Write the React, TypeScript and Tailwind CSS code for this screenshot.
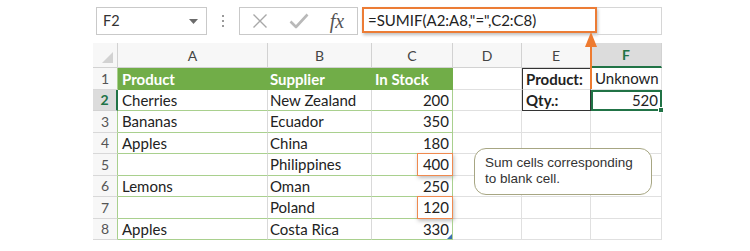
import React from 'react';

const font = { fontFamily: 'Lato, "Open Sans", sans-serif' };

type Row = { a: string; b: string; c: string; hl?: boolean; e?: string; f?: string };

const rows: Row[] = [
  { a: 'Cherries', b: 'New Zealand', c: '200', e: 'Qty.:', f: '520' },
  { a: 'Bananas', b: 'Ecuador', c: '350' },
  { a: 'Apples', b: 'China', c: '180' },
  { a: '', b: 'Philippines', c: '400', hl: true },
  { a: 'Lemons', b: 'Oman', c: '250' },
  { a: '', b: 'Poland', c: '120', hl: true },
  { a: 'Apples', b: 'Costa Rica', c: '330' },
];

function XIcon() {
  return (
    <svg width="16" height="16" viewBox="0 0 16 16">
      <path d="M1.5 1.5 L14.5 14.5 M14.5 1.5 L1.5 14.5" stroke="#a8a8a8" strokeWidth="1.4" fill="none" />
    </svg>
  );
}

function CheckIcon() {
  return (
    <svg width="20" height="16" viewBox="0 0 20 16">
      <path d="M1.5 8.5 L7 14 L18.5 1.5" stroke="#b9b9b9" strokeWidth="2.6" fill="none" strokeLinejoin="round" />
    </svg>
  );
}

export default function App() {
  return (
    <div className="relative w-[750px] h-[251px] bg-white overflow-hidden text-[#222]" style={font}>
      {/* formula bar */}
      <div className="flex items-start pt-[7px] pl-[96px]">
        <div className="w-[111px] h-[28px] border border-[#c9c9c9] bg-white flex items-center justify-between pl-[6px] pr-[8px]">
          <span className="text-[14.5px] text-[#333]">F2</span>
          <svg width="9" height="5" viewBox="0 0 9 5">
            <path d="M0 0 L9 0 L4.5 5 Z" fill="#6b6b6b" />
          </svg>
        </div>
        <div className="w-[32px] h-[28px] flex flex-col items-center justify-center gap-[3px]">
          <span className="block w-[2px] h-[2px] bg-[#9a9a9a]" />
          <span className="block w-[2px] h-[2px] bg-[#9a9a9a]" />
          <span className="block w-[2px] h-[2px] bg-[#9a9a9a]" />
        </div>
        <div className="w-[119px] h-[28px] border border-[#c9c9c9] bg-white flex items-center">
          <div className="w-[38px] flex justify-center pl-[2px]">
            <XIcon />
          </div>
          <div className="w-[42px] flex justify-center">
            <CheckIcon />
          </div>
          <div className="flex-1 flex justify-center pr-[3px]">
            <span className="italic text-[20px] leading-none text-[#555]" style={{ fontFamily: '"Liberation Serif", serif' }}>
              fx
            </span>
          </div>
        </div>
        <div className="ml-[4px] w-[300px] h-[28px] flex">
          <div className="w-[235px] h-[26px] border-2 border-[#ec7c35] bg-white flex items-center pl-[4px] shadow-[1px_2px_3px_rgba(0,0,0,0.25)]">
            <span className="text-[15px] text-[#222]">=SUMIF(A2:A8,"=",C2:C8)</span>
          </div>
          <div className="flex-1 h-[28px] border-t border-r border-b border-[#d6d6d6]" />
        </div>
      </div>

      {/* grid */}
      <div className="ml-[93px] mt-[8px] grid grid-cols-[25px_150px_104px_81px_69px_69px_71px] grid-rows-[25px_repeat(8,21.5px)] w-[569px]">
        {/* header row */}
        <div className="relative bg-[#f7f7f7] border-r border-b border-[#d2d2d2]">
          <svg className="absolute right-[4px] bottom-[4px]" width="11" height="11" viewBox="0 0 11 11">
            <path d="M11 0 L11 11 L0 11 Z" fill="#d2d2d2" />
          </svg>
        </div>
        <div className="bg-[#f7f7f7] border-r border-b border-[#d2d2d2] flex items-center justify-center text-[14px] text-[#444]">A</div>
        <div className="bg-[#f7f7f7] border-r border-b border-[#d2d2d2] flex items-center justify-center text-[14px] text-[#444]">B</div>
        <div className="bg-[#f7f7f7] border-r border-b border-[#d2d2d2] flex items-center justify-center text-[14px] text-[#444]">C</div>
        <div className="bg-[#f7f7f7] border-r border-b border-[#d2d2d2] flex items-center justify-center text-[14px] text-[#444]">D</div>
        <div className="bg-[#f7f7f7] border-r border-b border-[#d2d2d2] flex items-center justify-center text-[14px] text-[#444]">E</div>
        <div className="bg-[#dcdcdc] border-r border-[#d2d2d2] border-b-2 border-b-[#217346] flex items-center justify-center text-[14px] font-bold text-[#217346]">F</div>

        {/* row 1 */}
        <div className="bg-[#f7f7f7] border-r border-r-[#a9d08e] border-b border-b-[#d8d8d8] flex items-center justify-center text-[14px] text-[#555]">1</div>
        <div className="bg-[#71ad48] flex items-center pl-[4px] text-[15px] font-bold text-white">Product</div>
        <div className="bg-[#71ad48] flex items-center pl-[2px] text-[15px] font-bold text-white">Supplier</div>
        <div className="bg-[#71ad48] flex items-center pl-[3px] text-[15px] font-bold text-white">In Stock</div>
        <div className="border-r border-b border-[#e0e0e0]" />
        <div className="border border-[#333] border-b-[#e0e0e0] flex items-center pl-[3px] text-[15px] font-bold">Product:</div>
        <div className="border-r border-b border-[#e0e0e0] flex items-center pl-[4px] text-[15px]">Unknown</div>

        {rows.map((r, i) => {
          const n = i + 2;
          const sel = n === 2;
          return (
            <React.Fragment key={n}>
              {sel ? (
                <div className="bg-[#dcdcdc] border-r-2 border-r-[#217346] border-b border-b-[#d2d2d2] flex items-center justify-center text-[14px] font-bold text-[#217346]">
                  {n}
                </div>
              ) : (
                <div className="bg-[#f7f7f7] border-r border-r-[#a9d08e] border-b border-b-[#d8d8d8] flex items-center justify-center text-[14px] text-[#555]">
                  {n}
                </div>
              )}
              <div className="border-r border-r-[#d9d9d9] border-b border-b-[#a9d08e] flex items-center pl-[4px] text-[15px]">{r.a}</div>
              <div className="border-r border-r-[#d9d9d9] border-b border-b-[#a9d08e] flex items-center pl-[2px] text-[15px]">{r.b}</div>
              <div className="relative border-r border-r-[#a9d08e] border-b border-b-[#a9d08e] flex items-center justify-end pr-[3px] text-[15px]">
                {r.hl && (
                  <div className="absolute right-[-1px] top-[-1px] w-[36px] h-[23px] border-[1.5px] border-[#ef8a4f] shadow-[1px_2px_4px_rgba(0,0,0,0.25)]" />
                )}
                <span className="relative">{r.c}</span>
                {n === 8 && (
                  <svg className="absolute right-[0px] bottom-[0px]" width="5" height="5" viewBox="0 0 5 5">
                    <path d="M5 0 L5 5 L0 5 Z" fill="#3a6fb0" />
                  </svg>
                )}
              </div>
              <div className="border-r border-b border-[#e0e0e0]" />
              {sel ? (
                <div className="border-l border-l-[#333] border-r border-r-[#333] border-b border-b-[#333] flex items-center pl-[3px] text-[15px] font-bold">
                  {r.e}
                </div>
              ) : (
                <div className="border-r border-b border-[#e0e0e0]" />
              )}
              {sel ? (
                <div className="relative border-2 border-[#217346] flex items-center justify-end pr-[2px] text-[15px]">
                  {r.f}
                  <span className="absolute right-[-4px] bottom-[-4px] w-[6px] h-[6px] bg-[#217346] border border-white" />
                </div>
              ) : (
                <div className="border-r border-b border-[#e0e0e0]" />
              )}
            </React.Fragment>
          );
        })}
      </div>

      {/* arrow */}
      <svg className="absolute left-[585px] top-[32px]" width="12" height="57" viewBox="0 0 12 57">
        <path d="M6 0 L0 15 L12 15 Z" fill="#ee7b30" />
        <path d="M6 12 L6 57" stroke="#ee7b30" strokeWidth="2" />
      </svg>

      {/* callout */}
      <div
        className="absolute left-[474px] top-[148px] w-[178px] h-[47px] rounded-[12px] border-[1.5px] border-[#a7a683] bg-white pl-[10px] pt-[6px] text-[13.5px] leading-[16px] text-[#333]"
        style={{ fontFamily: '"Liberation Sans", Arial, sans-serif' }}
      >
        <div>Sum cells corresponding</div>
        <div>to blank cell.</div>
      </div>
    </div>
  );
}
